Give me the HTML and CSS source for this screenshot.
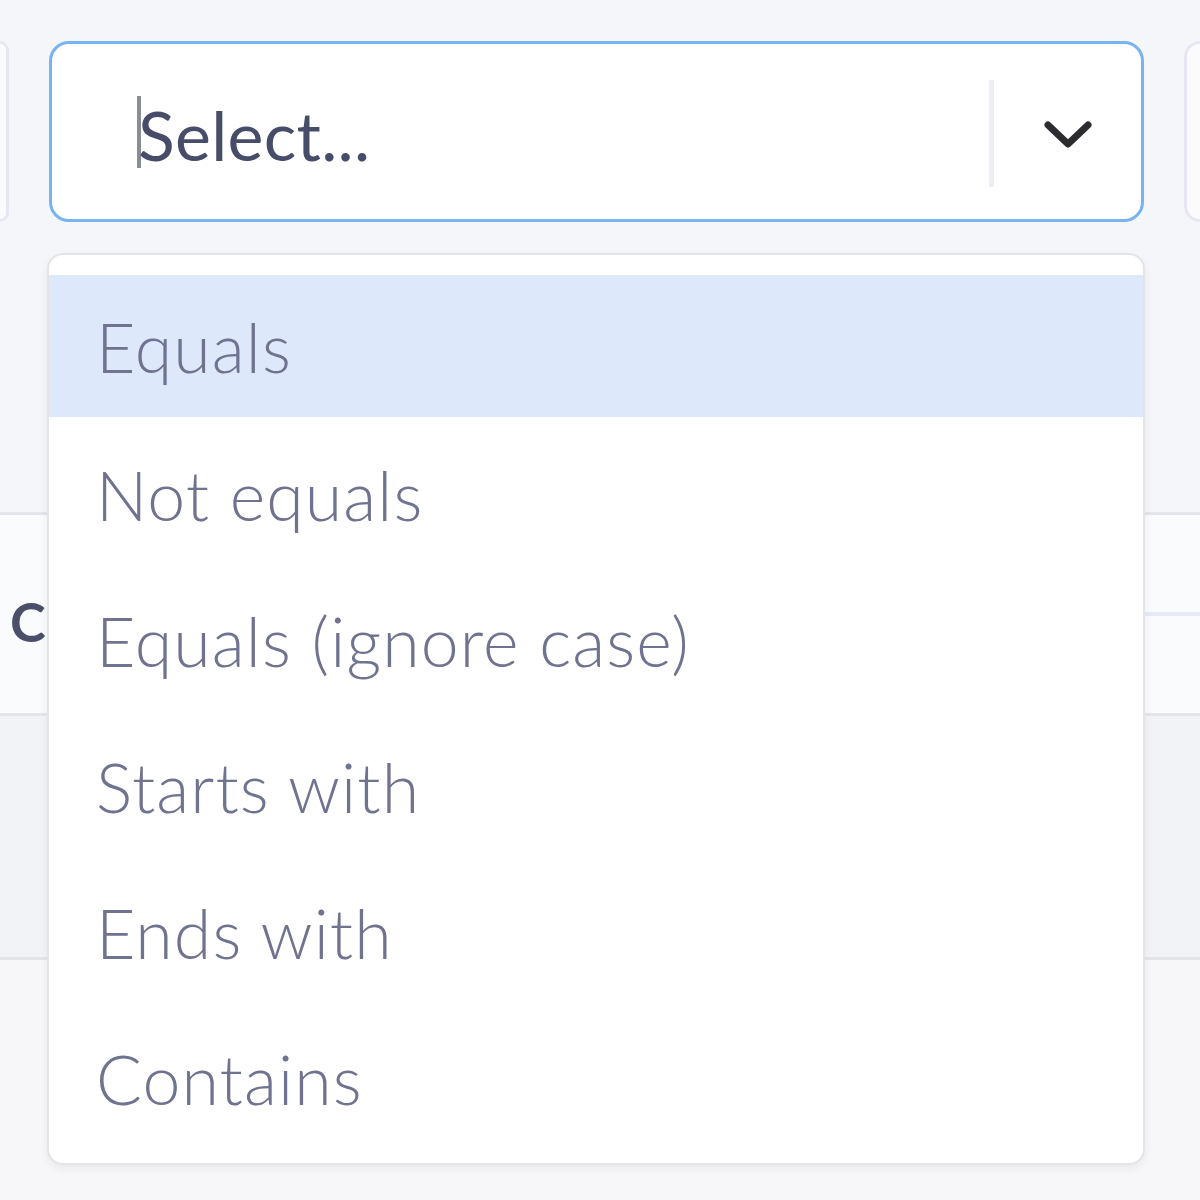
FILE: index.html
```html
<!DOCTYPE html>
<html lang="en">
<head>
<meta charset="utf-8">
<title>Filter operator select</title>
<link rel="stylesheet" href="styles.css">
</head>
<body>
<div class="page">
  <div class="filters">
    <div class="field field-left"></div>
    <div class="select is-focused">
      <div class="select-value">
        <span class="caret"></span><span class="placeholder">Select...</span>
      </div>
      <span class="select-sep"></span>
      <div class="select-indicator">
        <svg class="chevron" viewBox="0 0 50 30" width="50" height="30" aria-hidden="true">
          <path d="M5 5 L25 24 L45 5" fill="none" stroke="#2c2c30" stroke-width="7" stroke-linecap="round" stroke-linejoin="round"/>
        </svg>
      </div>
    </div>
    <div class="field field-right"></div>
  </div>

  <div class="table">
    <div class="table-row row-a">
      <div class="cell-first"><span class="cell-text">C</span></div>
      <div class="cell-rest">
        <div class="sub sub-top"></div>
        <div class="sub"></div>
      </div>
    </div>
    <div class="table-row row-b"></div>
    <div class="table-row row-c"></div>
  </div>

  <div class="menu" role="listbox">
    <div class="option is-active">Equals</div>
    <div class="option">Not equals</div>
    <div class="option">Equals (ignore case)</div>
    <div class="option">Starts with</div>
    <div class="option">Ends with</div>
    <div class="option">Contains</div>
  </div>
</div>
</body>
</html>
```

FILE: styles.css
```css
* { box-sizing: border-box; }

html, body {
  margin: 0;
  padding: 0;
}

body {
  background: #f5f6fa;
  font-family: "Lato", "Noto Sans", sans-serif;
  width: 1200px;
  height: 1200px;
  overflow: hidden;
}

.page {
  position: relative;
  width: 1200px;
  height: 1200px;
  overflow: hidden;
}

.filters {
  display: flex;
  gap: 40px;
  padding-top: 41px;
  height: 512px;
}

.field {
  height: 181px;
  background: #fbfbfd;
  border: 3px solid #e6e7f3;
}

.field-left {
  flex: 0 0 9px;
  border-left: none;
  border-radius: 0 20px 20px 0;
}

.field-right {
  flex: 1 1 auto;
  min-width: 0;
  border-right: none;
  border-radius: 20px 0 0 20px;
}

.select {
  flex: 0 0 1095px;
  height: 181px;
  background: #ffffff;
  border: 3px solid #78b4f2;
  border-radius: 20px;
  display: flex;
  align-items: center;
}

.select-value {
  flex: 1;
  display: flex;
  align-items: center;
  padding-left: 85px;
}

.caret {
  width: 4px;
  height: 72px;
  background: #8a8c96;
  margin-right: -3px;
}

.placeholder {
  font-size: 68px;
  font-weight: 400;
  color: #474c68;
  letter-spacing: 0.3px;
  line-height: 1;
  margin-top: 6px;
}

.select-sep {
  width: 5px;
  height: 107px;
  background: #eceef5;
  margin-top: 4px;
}

.select-indicator {
  width: 147px;
  display: flex;
  justify-content: center;
  align-items: center;
  padding-top: 6px;
}

.table {
  display: flex;
  flex-direction: column;
}

.table-row {
  border-top: 3px solid #e3e5ea;
}

.row-a {
  height: 201px;
  display: flex;
  background: #fafbfc;
}

.cell-first {
  width: 60px;
  display: flex;
  align-items: center;
  padding-left: 10px;
}

.cell-text {
  font-size: 54px;
  font-weight: 700;
  color: #4b4f69;
  margin-top: 14px;
}

.cell-rest {
  flex: 1;
  display: flex;
  flex-direction: column;
}

.sub {
  flex: 1;
}

.sub-top {
  border-bottom: 4px solid #e7e9f6;
  flex: 0 0 101px;
}

.row-b {
  height: 244px;
  background: #f2f3f7;
}

.row-c {
  height: 300px;
  background: #f7f7f9;
}

.menu {
  position: absolute;
  top: 253px;
  left: 47px;
  width: 1098px;
  height: 912px;
  background: #ffffff;
  border: 2px solid #e4e4e8;
  border-radius: 16px;
  box-shadow: 0 4px 10px rgba(0, 0, 0, 0.06);
  padding: 20px 0 12px;
  display: flex;
  flex-direction: column;
}

.option {
  height: 146px;
  flex: 0 0 146px;
  display: flex;
  align-items: center;
  padding-left: 47px;
  font-size: 68px;
  font-weight: 300;
  color: #6f7390;
  letter-spacing: 1.1px;
}

.option.is-active {
  background: #dde9fb;
  height: 142px;
  flex-basis: 142px;
  margin-bottom: 4px;
}
```
